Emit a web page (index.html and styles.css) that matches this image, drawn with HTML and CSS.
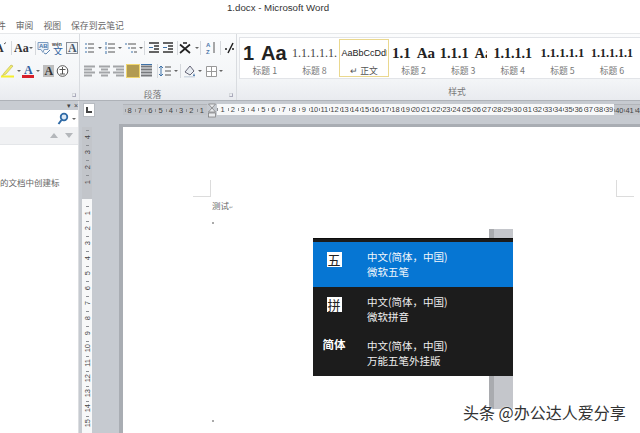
FILE: index.html
```html
<!DOCTYPE html>
<html lang="zh-CN">
<head>
  <meta charset="UTF-8">
  <title>1.docx - Microsoft Word</title>
  <link rel="stylesheet" href="styles.css">
</head>
<body>
  <div class="titlebar">1.docx - Microsoft Word</div>

  <div class="tabs">
    <span class="tab tab-cut">件</span>
    <span class="tab">审阅</span>
    <span class="tab">视图</span>
    <span class="tab">保存到云笔记</span>
  </div>

  <!-- Ribbon -->
  <div class="ribbon">
    <div class="group group-font">
      <div class="tool-row">
        <svg width="11" height="14" viewBox="0 0 11 14"><text x="-5" y="11" class="ico-serif">A</text><path d="M4 3l2-1.5" class="ln"/></svg>
        <i class="sep"></i>
        <svg width="23" height="14" viewBox="0 0 23 14"><text x="2" y="11" class="ico-serif">Aa</text><path d="M17 6h4l-2 2z" class="caret"/></svg>
        <i class="sep"></i>
        <svg width="15" height="14" viewBox="0 0 15 14"><path d="M2 1.500h10v7H8l-1 3-2-3H2z" fill="#eaf1f8" stroke="#7d9cc0"/><text x="3" y="7" class="ico-mini">AB</text><path d="M8 12l2 1 4-4" fill="none" stroke="#5b84b1"/></svg>
        <svg width="14" height="14" viewBox="0 0 14 14"><text x="1" y="5" class="ico-mini ico-dark">wén</text><text x="2" y="14" class="ico-cjk">文</text></svg>
        <svg width="14" height="14" viewBox="0 0 14 14"><rect x="1.500" y="1.500" width="11" height="11" fill="#f2f4f6" stroke="#8a8f96"/><text x="3" y="11" class="ico-serif ico-slate">A</text></svg>
      </div>
      <div class="tool-row">
        <svg width="21" height="14" viewBox="0 0 21 14"><path d="M2 12l4-2 7-8-2-1-7 8z" fill="#f3ee6a" stroke="#b9b04a" stroke-width=".6"/><rect x="1" y="11.500" width="13" height="2" fill="#f6ef2d"/><path d="M17 6h4l-2 2z" class="caret"/></svg>
        <svg width="20" height="14" viewBox="0 0 20 14"><text x="3" y="10" class="ico-serif ico-blue">A</text><rect x="1" y="11" width="12" height="3" fill="#d8212a"/><path d="M15 6h4l-2 2z" class="caret"/></svg>
        <svg width="14" height="14" viewBox="0 0 14 14"><rect x="2" y="1" width="11" height="12" fill="#bdbdbd"/><text x="3.500" y="11" class="ico-serif">A</text></svg>
        <svg width="14" height="14" viewBox="0 0 14 14"><circle cx="7.500" cy="7" r="5.300" fill="#fff" stroke="#555"/><path d="M4.500 5.500h6M7.500 3v7M5 10h5" class="ln"/></svg>
      </div>
      <div class="group-label"><i class="launcher"></i></div>
    </div>

    <div class="group group-para">
      <div class="tool-row">
        <svg width="20" height="14" viewBox="0 0 20 14"><path d="M1 3h2M1 7h2M1 11h2" stroke="#3f72a8" fill="none"/><path d="M4 3h6M4 7h6M4 11h6" class="ln"/><path d="M14 6h4l-2 2z" class="caret"/></svg>
        <svg width="20" height="14" viewBox="0 0 20 14"><path d="M2 1v3M2 5.500v3M2 10v3" stroke="#3f72a8" fill="none"/><path d="M4 3h7M4 7h7M4 11h7" class="ln"/><path d="M14 6h4l-2 2z" class="caret"/></svg>
        <svg width="20" height="14" viewBox="0 0 20 14"><path d="M1 3h2M4 7h2M7 11h2" stroke="#3f72a8" fill="none"/><path d="M4 3h8M7 7h5M10 11h3" class="ln"/><path d="M15 6h4l-2 2z" class="caret"/></svg>
        <i class="sep"></i>
        <svg width="18" height="14" viewBox="0 0 18 14"><path d="M4 2h10M9 5h5M9 8h5M4 11h10" class="ln ln-bold"/><path d="M8 6.500H4" stroke="#3f72a8" fill="none"/></svg>
        <svg width="14" height="14" viewBox="0 0 14 14"><path d="M0 2h10M5 5h5M5 8h5M0 11h10" class="ln ln-bold"/><path d="M0 6.500h4" stroke="#3f72a8" fill="none"/></svg>
        <i class="sep"></i>
        <svg width="22" height="14" viewBox="0 0 22 14"><path d="M2 12L12 3.500M2 3.500L12 12M5 2h4" fill="none" stroke="#222" stroke-width="1.700"/><path d="M17 6h4l-2 2z" class="caret"/></svg>
        <i class="sep"></i>
        <svg width="19" height="14" viewBox="0 0 19 14"><text x="5" y="6" class="ico-mini ico-blue">A</text><text x="5" y="13" class="ico-mini ico-red">Z</text><path d="M13 1v11" stroke="#555" fill="none"/></svg>
        <i class="sep"></i>
        <svg width="17" height="14" viewBox="0 0 17 14"><path d="M7 12l5-10M4 8h2M11 8h2" fill="none" stroke="#222" stroke-width="1.500"/></svg>
      </div>
      <div class="tool-row">
        <svg width="14" height="14" viewBox="0 0 14 14"><path d="M0 2.500h11M0 5.500h8M0 8.500h11M0 11.500h8" class="block"/></svg>
        <svg width="14" height="14" viewBox="0 0 14 14"><path d="M1 2.500h11M3 5.500h7M1 8.500h11M3 11.500h7" class="block"/></svg>
        <svg width="14" height="14" viewBox="0 0 14 14"><path d="M1 2.500h11M4 5.500h8M1 8.500h11M4 11.500h8" class="block"/></svg>
        <span class="tool-active"></span>
        <svg width="17" height="14" viewBox="0 0 17 14"><path d="M1 2.500h11M1 5.500h11M1 8.500h11M1 11.500h11" class="block block-dark"/><path d="M1 .500h11" stroke="#3f72a8" fill="none"/></svg>
        <i class="sep"></i>
        <svg width="22" height="14" viewBox="0 0 22 14"><path d="M3 2v10M1 4l2-2 2 2M1 10l2 2 2-2" stroke="#3f72a8" fill="none"/><path d="M7 3h6M7 7h6M7 11h6" class="ln"/><path d="M16 6h4l-2 2z" class="caret"/></svg>
        <i class="sep"></i>
        <svg width="24" height="14" viewBox="0 0 24 14"><path d="M4 8l5-6 4 5-4 4z" fill="#e9edf2" stroke="#667"/><path d="M13 9l1 3h-2z" fill="#3f72a8"/><rect x="3" y="12" width="11" height="1.500" fill="#cfd8e2"/><path d="M17 6h4l-2 2z" class="caret"/></svg>
        <svg width="20" height="14" viewBox="0 0 20 14"><path d="M1.500 2.500h10v10h-10zM6.500 2.500v10M1.500 7.500h10" fill="#fff" stroke="#999"/><path d="M14 6h4l-2 2z" class="caret"/></svg>
      </div>
      <div class="group-label">段落<i class="launcher"></i></div>
    </div>

    <div class="group group-styles">
      <div class="gallery">
        <div class="style-cell"><span class="preview p-heading1">1 Aa</span><span class="style-name">标题 1</span></div>
        <div class="style-cell"><span class="preview p-heading8">1.1.1.1.1.</span><span class="style-name">标题 8</span></div>
        <div class="style-cell selected"><span class="preview p-normal">AaBbCcDdI</span><span class="style-name">↵ 正文</span></div>
        <div class="style-cell"><span class="preview p-heading2">1.1 Aa</span><span class="style-name">标题 2</span></div>
        <div class="style-cell"><span class="preview p-heading3">1.1.1 Aa</span><span class="style-name">标题 3</span></div>
        <div class="style-cell"><span class="preview p-heading4">1.1.1.1</span><span class="style-name">标题 4</span></div>
        <div class="style-cell"><span class="preview p-heading5">1.1.1.1.1</span><span class="style-name">标题 5</span></div>
        <div class="style-cell"><span class="preview p-heading6">1.1.1.1.1</span><span class="style-name">标题 6</span></div>
      </div>
      <div class="group-label">样式</div>
    </div>
  </div>

  <div class="workspace">
    <!-- Navigation pane -->
    <div class="nav">
      <div class="nav-head"><span class="nav-ctl">▾</span><span class="nav-ctl">×</span></div>
      <div class="nav-search">
        <svg width="12" height="14" viewBox="0 0 12 14"><circle cx="7" cy="5" r="3.300" fill="#dbe8f5" stroke="#2f6aa6" stroke-width="1.800"/><path d="M4.500 8L1.500 12" stroke="#2f6aa6" stroke-width="2"/></svg>
        <i class="nav-caret"></i>
      </div>
      <div class="nav-arrows"><i class="arrow-up"></i><i class="arrow-down"></i></div>
      <div class="nav-body">的文档中创建标</div>
    </div>

    <div class="editor">
      <div class="ruler-row">
        <div class="tab-stop"><span></span></div>
        <div class="hruler">
          <div class="hr-off hr-left">
            <span>8</span><span>7</span><span>6</span><span>5</span><span>4</span><span>3</span><span>2</span><span>1</span>
          </div>
          <svg class="indent" width="10" height="15" viewBox="0 0 10 15"><path d="M1.500 1h7L1.500 9h7z" fill="#e8eaed" stroke="#777" stroke-width=".7"/><rect x="1.500" y="10" width="7" height="4" fill="#e8eaed" stroke="#777" stroke-width=".7"/></svg>
          <div class="hr-on">
            <span>1</span><span>2</span><span>3</span><span>4</span><span>5</span><span>6</span><span>7</span><span>8</span><span>9</span><span>10</span>
            <span>11</span><span>12</span><span>13</span><span>14</span><span>15</span><span>16</span><span>17</span><span>18</span><span>19</span><span>20</span>
            <span>21</span><span>22</span><span>23</span><span>24</span><span>25</span><span>26</span><span>27</span><span>28</span><span>29</span><span>30</span>
            <span>31</span><span>32</span><span>33</span><span>34</span><span>35</span><span>36</span><span>37</span><span>38</span><span>39</span>
          </div>
          <div class="hr-off">
            <span>40</span><span>41</span><span>42</span>
          </div>
        </div>
      </div>

      <div class="editor-body">
        <div class="vruler-col">
          <div class="vruler">
            <div class="vr-off">
              <span><b>4</b></span><span><b>3</b></span><span><b>2</b></span><span><b>1</b></span>
            </div>
            <div class="vr-on">
              <span><b>1</b></span><span><b>2</b></span><span><b>3</b></span><span><b>4</b></span><span><b>5</b></span>
              <span><b>6</b></span><span><b>7</b></span><span><b>8</b></span><span><b>9</b></span><span><b>10</b></span>
              <span><b>11</b></span><span><b>12</b></span><span><b>13</b></span><span><b>14</b></span><span><b>15</b></span>
            </div>
          </div>
        </div>
        <div class="page">
          <i class="crop crop-left"></i>
          <i class="crop crop-right"></i>
          <p class="doc-line">测试<span class="pilcrow">↵</span></p>
          <i class="mark mark-one"></i>
          <i class="mark mark-two"></i>
        </div>
      </div>
    </div>
  </div>

  <!-- Input method switcher -->
  <div class="backing-strip"></div>
  <div class="ime">
    <div class="ime-row active">
      <div class="ime-icon"><span class="ime-box">五</span></div>
      <div class="ime-text">中文(简体，中国)<br>微软五笔</div>
    </div>
    <div class="ime-row">
      <div class="ime-icon"><span class="ime-box">拼</span></div>
      <div class="ime-text">中文(简体，中国)<br>微软拼音</div>
    </div>
    <div class="ime-row">
      <div class="ime-icon ime-word">简体</div>
      <div class="ime-text">中文(简体，中国)<br>万能五笔外挂版</div>
    </div>
  </div>

  <div class="watermark">头条 @办公达人爱分享</div>
</body>
</html>
```

FILE: styles.css
```css
* {
  box-sizing: border-box;
}

body {
  margin: 0;
  width: 640px;
  height: 433px;
  overflow: hidden;
  position: relative;
  display: flex;
  flex-direction: column;
  background: #fff;
  font-family: "Liberation Sans", "Noto Sans CJK SC", sans-serif;
}

.titlebar {
  height: 15px;
  padding: 1px 84px 0 0;
  text-align: center;
  font-size: 9.700px;
  line-height: 14px;
  color: #333;
}

.tabs {
  height: 18px;
  display: flex;
  align-items: center;
  gap: 10px;
  padding-top: 3px;
  font-family: "Noto Sans CJK SC", sans-serif;
  font-size: 8.800px;
  color: #666;
}

.tab-cut {
  margin-left: -3px;
}

/* Ribbon */
.ribbon {
  height: 67px;
  display: flex;
  background: linear-gradient(#fbfcfd, #f3f5f7 70%, #e9ebef);
  border-top: 1px solid #e6e8ea;
}

.group {
  display: flex;
  flex-direction: column;
  border-right: 1px solid #d9dce0;
}

.group-font {
  width: 80px;
  padding-top: 7px;
  gap: 9px;
}

.group-para {
  width: 157px;
  padding-top: 7px;
  padding-left: 4px;
  gap: 9px;
}

.group-styles {
  flex: 1;
  border-right: none;
  padding: 3px 0 0 2px;
}

.tool-row {
  display: flex;
  align-items: center;
  height: 14px;
  flex: none;
}

.tool-row svg {
  flex: none;
  display: block;
}

.sep {
  flex: none;
  width: 1px;
  height: 14px;
  background: #d5d8dc;
}

.ln {
  fill: none;
  stroke: #555;
}

.ln-bold {
  stroke: #333;
  stroke-width: 1.300;
}

.caret {
  fill: #666;
}

.block {
  fill: none;
  stroke: #a3a5a8;
  stroke-width: 2;
}

.block-dark {
  stroke: #77797c;
}

.ico-serif {
  font-family: "Liberation Serif", serif;
  font-weight: bold;
  font-size: 12px;
  fill: #333;
}

.ico-slate {
  fill: #4a5a6c;
}

.ico-blue {
  fill: #2f5f9e;
}

.ico-red {
  fill: #c8333a;
}

.ico-mini {
  font-family: "Liberation Sans", sans-serif;
  font-weight: bold;
  font-size: 6px;
  fill: #4a78ab;
}

.ico-dark {
  fill: #444;
  font-size: 5px;
}

.ico-cjk {
  font-family: "Noto Sans CJK SC", sans-serif;
  font-size: 10px;
  fill: #2f5f9e;
}

.tool-active {
  flex: none;
  width: 14px;
  height: 14px;
  background: #b29b52;
  border: 1px solid #f0d66e;
}

.group-label {
  position: relative;
  margin-top: auto;
  height: 16px;
  text-align: center;
  font-family: "Noto Sans CJK SC", sans-serif;
  font-size: 8.800px;
  line-height: 15px;
  color: #777;
}

.group-para .group-label {
  padding-right: 15px;
}

.group-styles .group-label {
  padding-left: 35px;
}

.launcher {
  position: absolute;
  right: 3px;
  top: 6px;
  width: 4px;
  height: 4px;
  border: 1px solid #aab;
  border-top-color: #d5d8dc;
  border-left-color: #d5d8dc;
}

.gallery {
  height: 42px;
  display: flex;
  background: #fff;
  border: 1px solid #e2e4e8;
  border-right: none;
  padding-top: 1px;
}

.style-cell {
  flex: none;
  width: 49.600px;
  height: 38px;
  display: flex;
  flex-direction: column;
  align-items: center;
  border: 1px solid transparent;
}

.style-cell.selected {
  border-color: #ead88e;
}

.preview {
  width: 47px;
  height: 24px;
  margin-top: 1px;
  overflow: hidden;
  white-space: nowrap;
  text-align: center;
  line-height: 25px;
  color: #222;
  font-family: "Liberation Serif", serif;
}

.p-heading1 {
  font-family: "Liberation Sans", sans-serif;
  font-size: 20px;
  font-weight: bold;
  word-spacing: 2px;
}

.p-heading8 {
  font-size: 12px;
  color: #444;
}

.p-normal {
  font-family: "Liberation Sans", sans-serif;
  font-size: 9px;
  text-align: left;
  padding-left: 1px;
}

.p-heading2 {
  font-size: 15px;
  font-weight: bold;
  word-spacing: 3px;
}

.p-heading3 {
  font-size: 14.500px;
  font-weight: bold;
  text-align: left;
  word-spacing: 3px;
}

.p-heading4 {
  font-size: 14px;
  font-weight: bold;
}

.p-heading5 {
  font-size: 12.500px;
  font-weight: bold;
}

.p-heading6 {
  font-size: 12px;
  font-weight: bold;
}

.style-name {
  font-family: "Noto Sans CJK SC", sans-serif;
  font-size: 8.800px;
  line-height: 11px;
  color: #777;
}

.selected .style-name {
  color: #555;
}

/* Work area */
.workspace {
  flex: 1;
  min-height: 0;
  display: flex;
  background: #c6cad0;
  border-top: 1px solid #aeb2b8;
}

.nav {
  width: 78px;
  flex: none;
  display: flex;
  flex-direction: column;
  background: #fff;
  overflow: hidden;
}

.nav-head {
  height: 9px;
  display: flex;
  justify-content: flex-end;
  align-items: center;
  gap: 3px;
  background: #c8ccd2;
  font-size: 7px;
  line-height: 9px;
  color: #444;
}

.nav-search {
  height: 17px;
  display: flex;
  justify-content: flex-end;
  align-items: center;
  gap: 3px;
  padding-right: 2px;
}

.nav-caret {
  width: 0;
  height: 0;
  border: 2px solid transparent;
  border-top-color: #666;
  margin-top: 2px;
}

.nav-arrows {
  height: 18px;
  display: flex;
  justify-content: flex-end;
  align-items: center;
  gap: 7px;
  padding-right: 5px;
  background: #f0f1f3;
  border-bottom: 1px solid #e4e6e9;
}

.arrow-up {
  width: 0;
  height: 0;
  border: 4px solid transparent;
  border-top: none;
  border-bottom: 5px solid #b4b7bb;
}

.arrow-down {
  width: 0;
  height: 0;
  border: 4px solid transparent;
  border-bottom: none;
  border-top: 5px solid #b4b7bb;
}

.nav-body {
  padding-top: 31px;
  font-family: "Noto Sans CJK SC", sans-serif;
  font-size: 8.500px;
  line-height: 12px;
  color: #666;
  white-space: nowrap;
}

.editor {
  flex: 1;
  min-width: 0;
  display: flex;
  flex-direction: column;
  border-left: 1px solid #dcdee1;
}

.ruler-row {
  height: 23px;
  flex: none;
  display: flex;
  align-items: flex-start;
  padding: 2px 0 0 4px;
}

.tab-stop {
  flex: none;
  width: 12px;
  height: 14px;
  display: flex;
  justify-content: center;
  align-items: center;
  background: #fff;
  border: 1px solid #b7bbc1;
}

.tab-stop span {
  width: 6px;
  height: 6px;
  border-left: 2px solid #444;
  border-bottom: 2px solid #444;
}

.hruler {
  flex: none;
  margin-left: 28px;
  display: flex;
  align-items: flex-start;
  height: 15px;
  font-size: 7.500px;
  color: #444;
}

.hr-off,
.hr-on {
  display: flex;
  height: 11px;
  margin-top: 1px;
  line-height: 11px;
}

.hr-off {
  background: #c2c5ca;
  border-top: 1px solid #b2b5ba;
}

.hr-left {
  padding-left: 1.500px;
}

.hr-on {
  background: #f7f8f9;
}

.hr-off span,
.hr-on span {
  flex: none;
  width: 10.300px;
  text-align: center;
  background: linear-gradient(#8c8f94, #8c8f94) 0 50% / 1px 3px no-repeat;
}

.hr-on span {
  width: 10.180px;
}

.indent {
  flex: none;
  display: block;
  margin: 0 .300px;
}

.editor-body {
  flex: 1;
  min-height: 0;
  display: flex;
}

.vruler-col {
  width: 40px;
  flex: none;
  padding: 3px 0 0 3px;
}

.vruler {
  width: 10px;
  font-size: 7.500px;
  color: #444;
}

.vr-off {
  height: 72px;
  padding-top: 2.500px;
  background: #c2c5ca;
}

.vr-on {
  padding-top: 6.500px;
  background: #f7f8f9;
  height: 240px;
}

.vruler span {
  display: flex;
  height: 15px;
  justify-content: center;
  align-items: center;
  background: linear-gradient(#8c8f94, #8c8f94) 50% 0 / 3px 1px no-repeat;
}

.vruler b {
  font-weight: normal;
  writing-mode: vertical-rl;
  transform: rotate(180deg);
}

.page {
  position: relative;
  flex: 1;
  background: #fff;
  border-top: 3px solid #a9adb3;
  border-left: 4px solid #a9adb3;
  padding: 72px 0 0 89px;
}

.crop {
  position: absolute;
  top: 53px;
  width: 18px;
  height: 17px;
  border-bottom: 1px solid #dcdcdc;
}

.crop-left {
  left: 70px;
  border-right: 1px solid #dcdcdc;
}

.crop-right {
  left: 493px;
  border-left: 1px solid #dcdcdc;
}

.doc-line {
  margin: 0;
  font-family: "Liberation Serif", "Noto Sans CJK SC", serif;
  font-size: 8.500px;
  line-height: 14px;
  color: #666;
}

.pilcrow {
  font-size: 5px;
  color: #999;
}

.mark {
  position: absolute;
  left: 89px;
  width: 2px;
  height: 2px;
  background: #aaa;
}

.mark-one {
  top: 95px;
}

.mark-two {
  top: 293px;
}

/* Input method switcher */
.backing-strip {
  position: absolute;
  left: 489px;
  top: 229px;
  width: 24px;
  height: 180px;
  background: linear-gradient(to right, #a9abaf 5px, #c4c6cb 5px);
}

.ime {
  position: absolute;
  left: 313px;
  top: 238px;
  width: 200px;
  height: 138px;
  padding-top: 3px;
  background: #1c1c1c;
  border-top: 1px solid #0c0c0c;
  font-family: "Noto Sans CJK SC", sans-serif;
  color: #eee;
}

.ime-row {
  display: flex;
  align-items: center;
  height: 44.500px;
}

.ime-row.active {
  background: #0676d3;
  color: #f2f6fb;
}

.ime-icon {
  width: 42px;
  flex: none;
  display: flex;
  justify-content: center;
  padding-bottom: 9px;
  margin-right: 12px;
}

.ime-box {
  width: 15px;
  height: 15px;
  background: #fff;
  color: #222;
  font-size: 13px;
  line-height: 15px;
  text-align: center;
}

.ime-word {
  padding-bottom: 18px;
  font-size: 11.500px;
  font-weight: bold;
  line-height: 15px;
  color: #fff;
}

.ime-text {
  font-size: 10.500px;
  line-height: 15px;
}

.watermark {
  position: absolute;
  left: 463px;
  top: 401px;
  font-family: "Noto Sans CJK SC", sans-serif;
  font-size: 16px;
  line-height: 22px;
  color: #333;
  white-space: nowrap;
  text-shadow: 0 0 2px #fff, 1px 1px 1px #fff;
}
```
